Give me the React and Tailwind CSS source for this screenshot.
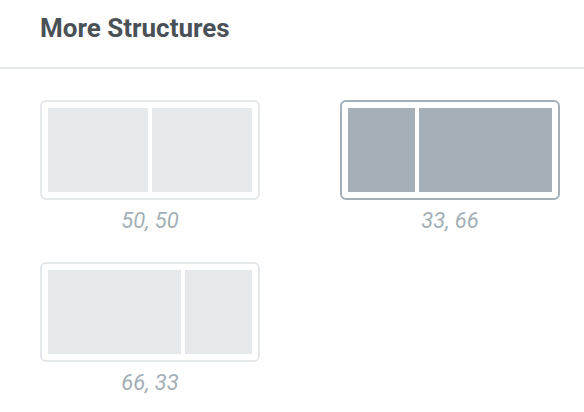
import React from "react";

const presets = [
  { label: "50, 50", cols: [1, 1], active: false },
  { label: "33, 66", cols: [1, 2], active: true },
  { label: "66, 33", cols: [2, 1], active: false },
];

function Preset({ label, cols, active }) {
  return (
    <div className="flex flex-col items-center">
      <div
        className={`w-[220px] h-[100px] rounded-[6px] border-2 p-[6px] flex gap-[4px] ${
          active ? "border-[#a4afb7]" : "border-[#e6e9ec]"
        }`}
      >
        {cols.map((c, i) => (
          <div
            key={i}
            className={`h-full ${c === 2 ? "flex-[2]" : "flex-[1]"} ${
              active ? "bg-[#a4afb7]" : "bg-[#e6e9ec]"
            }`}
          />
        ))}
      </div>
      <p className="mt-[8px] text-[22px] leading-[26px] italic text-[#a4afb7]">{label}</p>
    </div>
  );
}

export default function App() {
  return (
    <div
      className="w-[584px] h-[412px] bg-white overflow-hidden"
      style={{ fontFamily: "Roboto, 'Liberation Sans', sans-serif" }}
    >
      <div className="h-[69px] border-b-2 border-[#e6e9ec] px-[40px] pt-[13px]">
        <h2 className="text-[26px] leading-[30px] font-bold text-[#495157]">More Structures</h2>
      </div>
      <div className="px-[40px] pt-[31px] grid grid-cols-[220px_220px] gap-x-[80px] gap-y-[28px]">
        {presets.map((p) => (
          <Preset key={p.label} {...p} />
        ))}
      </div>
    </div>
  );
}
